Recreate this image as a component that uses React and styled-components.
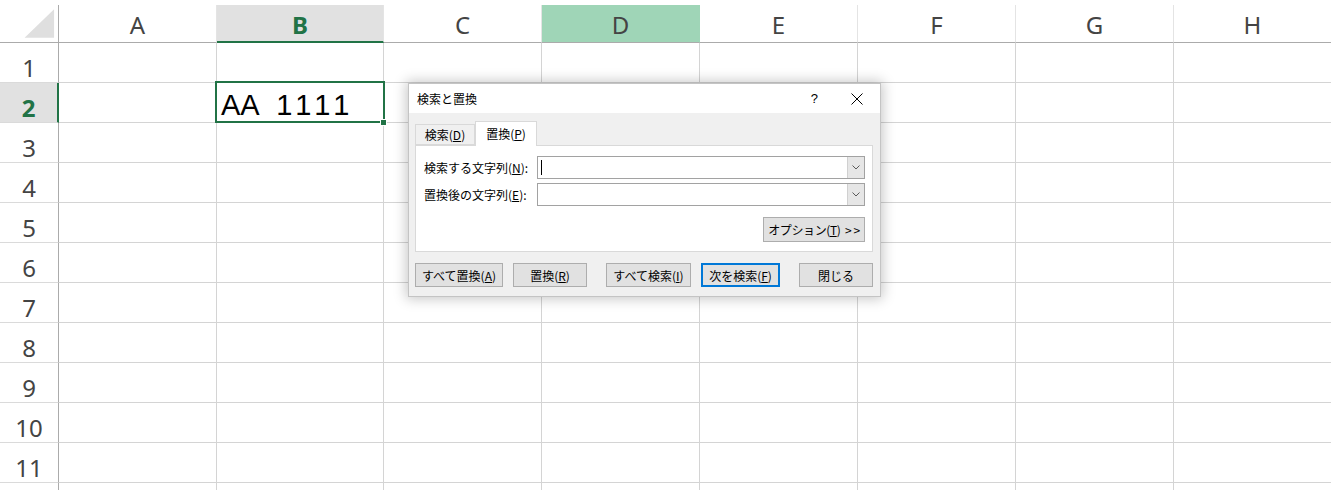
import React from 'react';
import styled, { createGlobalStyle, css } from 'styled-components';

const GlobalStyle = createGlobalStyle`
  html, body {
    margin: 0;
    padding: 0;
    background: #fff;
    overflow: hidden;
  }
`;

const GREEN = '#217346';

const Sheet = styled.div`
  position: relative;
  width: 1331px;
  height: 490px;
  overflow: hidden;
  padding-top: 5px;
  box-sizing: border-box;
  background: #fff;
`;

const Grid = styled.div`
  display: grid;
  grid-template-columns: 59px 158px 167px repeat(6, 158px);
  grid-template-rows: 38px;
  grid-auto-rows: 40px;
`;

const Corner = styled.div`
  box-sizing: border-box;
  border-right: 1px solid #ababab;
  border-bottom: 1px solid #ababab;
  display: flex;
  align-items: flex-start;
  justify-content: flex-start;
`;

const ColHead = styled.div`
  box-sizing: border-box;
  display: flex;
  align-items: center;
  justify-content: center;
  border-right: 1px solid #e4e4e4;
  border-bottom: 1px solid #ababab;
  font-family: "Noto Sans", "Open Sans", sans-serif;
  font-size: 24px;
  color: #444;
  padding-top: 1px;
  ${(p) =>
    p.$state === 'selected' &&
    css`
      background: #e1e1e1;
      color: ${GREEN};
      font-weight: 700;
      border-bottom: 2px solid ${GREEN};
      padding-top: 2px;
    `}
  ${(p) =>
    p.$state === 'hover' &&
    css`
      background: #9fd5b7;
      border-right-color: #9fd5b7;
    `}
`;

const RowHead = styled.div`
  box-sizing: border-box;
  display: flex;
  align-items: center;
  justify-content: center;
  padding-top: 9px;
  border-right: 1px solid #ababab;
  border-bottom: 1px solid #dadada;
  font-family: "Noto Sans", "Open Sans", sans-serif;
  font-size: 24px;
  color: #444;
  ${(p) =>
    p.$selected &&
    css`
      background: #e1e1e1;
      color: ${GREEN};
      font-weight: 700;
      border-right: 2px solid ${GREEN};
    `}
`;

const Cell = styled.div`
  position: relative;
  box-sizing: border-box;
  border-right: 1px solid #d4d4d4;
  border-bottom: 1px solid #d4d4d4;
  display: flex;
  align-items: flex-end;
  padding: 0 0 2px 4px;
  font-family: "Liberation Sans", Arial, sans-serif;
  font-size: 29px;
  line-height: 1;
  white-space: pre;
  color: #000;
  ${(p) =>
    p.$active &&
    css`
      &::after {
        content: '';
        position: absolute;
        top: -2px;
        left: -2px;
        right: -2px;
        bottom: -1px;
        border: 2px solid ${GREEN};
        pointer-events: none;
      }
      &::before {
        content: '';
        position: absolute;
        right: -4px;
        bottom: -4px;
        width: 5px;
        height: 5px;
        background: ${GREEN};
        border: 1px solid #fff;
        z-index: 2;
      }
    `}
`;

const Digits = styled.span`
  letter-spacing: 5px;
  margin-left: 2px;
`;

/* ---------- dialog ---------- */

const Dialog = styled.div`
  position: absolute;
  left: 408px;
  top: 83px;
  width: 473px;
  height: 214px;
  box-sizing: border-box;
  background: #f0f0f0;
  border: 1px solid #c4c4c4;
  box-shadow: 0 0 12px 2px rgba(0, 0, 0, 0.22);
  display: flex;
  flex-direction: column;
  font-family: "Noto Sans CJK JP", "Noto Sans", sans-serif;
  font-size: 12px;
  color: #000;
`;

const TitleBar = styled.div`
  height: 29px;
  background: #fff;
  display: flex;
  align-items: center;
  padding: 0 17px 0 8px;
`;

const Title = styled.span`
  flex: 1;
`;

const Help = styled.span`
  font-family: "Liberation Sans", Arial, sans-serif;
  font-size: 13px;
  margin-right: 33px;
`;

const Body = styled.div`
  padding: 8px 0 0 6px;
  display: flex;
  flex-direction: column;
`;

const TabBar = styled.div`
  display: flex;
  align-items: flex-end;
  height: 24px;
  position: relative;
  z-index: 1;
`;

const Tab = styled.div`
  box-sizing: border-box;
  height: ${(p) => (p.$active ? '25px' : '21px')};
  margin-bottom: ${(p) => (p.$active ? '-1px' : '0')};
  width: ${(p) => p.$w}px;
  border: 1px solid #d9d9d9;
  border-bottom: ${(p) => (p.$active ? 'none' : '1px solid #d9d9d9')};
  background: ${(p) => (p.$active ? '#fff' : '#f0f0f0')};
  display: flex;
  align-items: center;
  justify-content: center;
  padding-bottom: ${(p) => (p.$active ? '2px' : '0')};
`;

const Panel = styled.div`
  box-sizing: border-box;
  width: 458px;
  height: 107px;
  background: #fff;
  border: 1px solid #d9d9d9;
  padding: 10px 7px 0 8px;
  display: flex;
  flex-direction: column;
  gap: 4px;
`;

const FieldRow = styled.div`
  display: grid;
  grid-template-columns: 113px 328px;
  align-items: center;
  height: 23px;
`;

const Combo = styled.div`
  position: relative;
  box-sizing: border-box;
  height: 23px;
  border: 1px solid #a2a2a2;
  background: #fff;
  display: flex;
  align-items: stretch;
  justify-content: flex-end;
`;

const Caret = styled.span`
  position: absolute;
  left: 3px;
  top: 3px;
  width: 1px;
  height: 15px;
  background: #000;
`;

const DropButton = styled.div`
  width: 16px;
  background: #e6e6e6;
  border-left: 1px solid #d0d0d0;
  display: flex;
  align-items: center;
  justify-content: center;
`;

const OptionRow = styled.div`
  display: flex;
  justify-content: flex-end;
  margin-top: 7px;
`;

const Button = styled.div`
  box-sizing: border-box;
  width: ${(p) => p.$w}px;
  height: ${(p) => p.$h || 24}px;
  margin-left: ${(p) => p.$ml || 0}px;
  background: #e1e1e1;
  border: ${(p) => (p.$focus ? '2px solid #0078d7' : '1px solid #adadad')};
  display: flex;
  align-items: center;
  justify-content: center;
  white-space: pre;
  letter-spacing: ${(p) => (p.$tight ? '-0.4px' : '0')};
`;

const ButtonRow = styled.div`
  display: flex;
  margin-top: 11px;
`;

const ChevronDown = () => (
  <svg width="8" height="5" viewBox="0 0 8 5">
    <polyline points="0.5,0.5 4,4 7.5,0.5" fill="none" stroke="#5a5a5a" strokeWidth="1" />
  </svg>
);

const CloseIcon = () => (
  <svg width="12" height="12" viewBox="0 0 12 12">
    <line x1="0.5" y1="0.5" x2="11.5" y2="11.5" stroke="#000" strokeWidth="1" />
    <line x1="11.5" y1="0.5" x2="0.5" y2="11.5" stroke="#000" strokeWidth="1" />
  </svg>
);

const CornerTriangle = () => (
  <svg width="59" height="37" viewBox="0 0 59 37">
    <polygon points="25,33 55,4 55,33" fill="#dfdfdf" />
  </svg>
);

const columns = ['A', 'B', 'C', 'D', 'E', 'F', 'G', 'H'];
const rows = [1, 2, 3, 4, 5, 6, 7, 8, 9, 10, 11, 12];

function colState(c) {
  if (c === 'B') return 'selected';
  if (c === 'D') return 'hover';
  return undefined;
}

export default function App() {
  return (
    <>
      <GlobalStyle />
      <Sheet>
        <Grid>
          <Corner>
            <CornerTriangle />
          </Corner>
          {columns.map((c) => (
            <ColHead key={c} $state={colState(c)}>
              {c}
            </ColHead>
          ))}
          {rows.map((r) => (
            <React.Fragment key={r}>
              {/* row 12 is below the fold, its number is not visible */}
              <RowHead $selected={r === 2}>{r < 12 ? r : ''}</RowHead>
              {columns.map((c) => {
                const active = r === 2 && c === 'B';
                return (
                  <Cell key={c} $active={active}>
                    {active && (
                      <>
                        {'AA  '}
                        <Digits>1111</Digits>
                      </>
                    )}
                  </Cell>
                );
              })}
            </React.Fragment>
          ))}
        </Grid>

        <Dialog>
          <TitleBar>
            <Title>検索と置換</Title>
            <Help>?</Help>
            <CloseIcon />
          </TitleBar>
          <Body>
            <TabBar>
              <Tab $w={60}>
                <span>検索(<u>D</u>)</span>
              </Tab>
              <Tab $w={62} $active>
                <span>置換(<u>P</u>)</span>
              </Tab>
            </TabBar>
            <Panel>
              <FieldRow>
                <span>検索する文字列(<u>N</u>):</span>
                <Combo>
                  <Caret />
                  <DropButton>
                    <ChevronDown />
                  </DropButton>
                </Combo>
              </FieldRow>
              <FieldRow>
                <span>置換後の文字列(<u>E</u>):</span>
                <Combo>
                  <DropButton>
                    <ChevronDown />
                  </DropButton>
                </Combo>
              </FieldRow>
              <OptionRow>
                <Button $w={102} $h={25} $tight>
                  <span>オプション(<u>T</u>)  &gt; &gt;</span>
                </Button>
              </OptionRow>
            </Panel>
            <ButtonRow>
              <Button $w={88}>
                <span>すべて置換(<u>A</u>)</span>
              </Button>
              <Button $w={74} $ml={10}>
                <span>置換(<u>R</u>)</span>
              </Button>
              <Button $w={85} $ml={19}>
                <span>すべて検索(<u>I</u>)</span>
              </Button>
              <Button $w={79} $ml={10} $focus>
                <span>次を検索(<u>F</u>)</span>
              </Button>
              <Button $w={74} $ml={19}>
                <span>閉じる</span>
              </Button>
            </ButtonRow>
          </Body>
        </Dialog>
      </Sheet>
    </>
  );
}
